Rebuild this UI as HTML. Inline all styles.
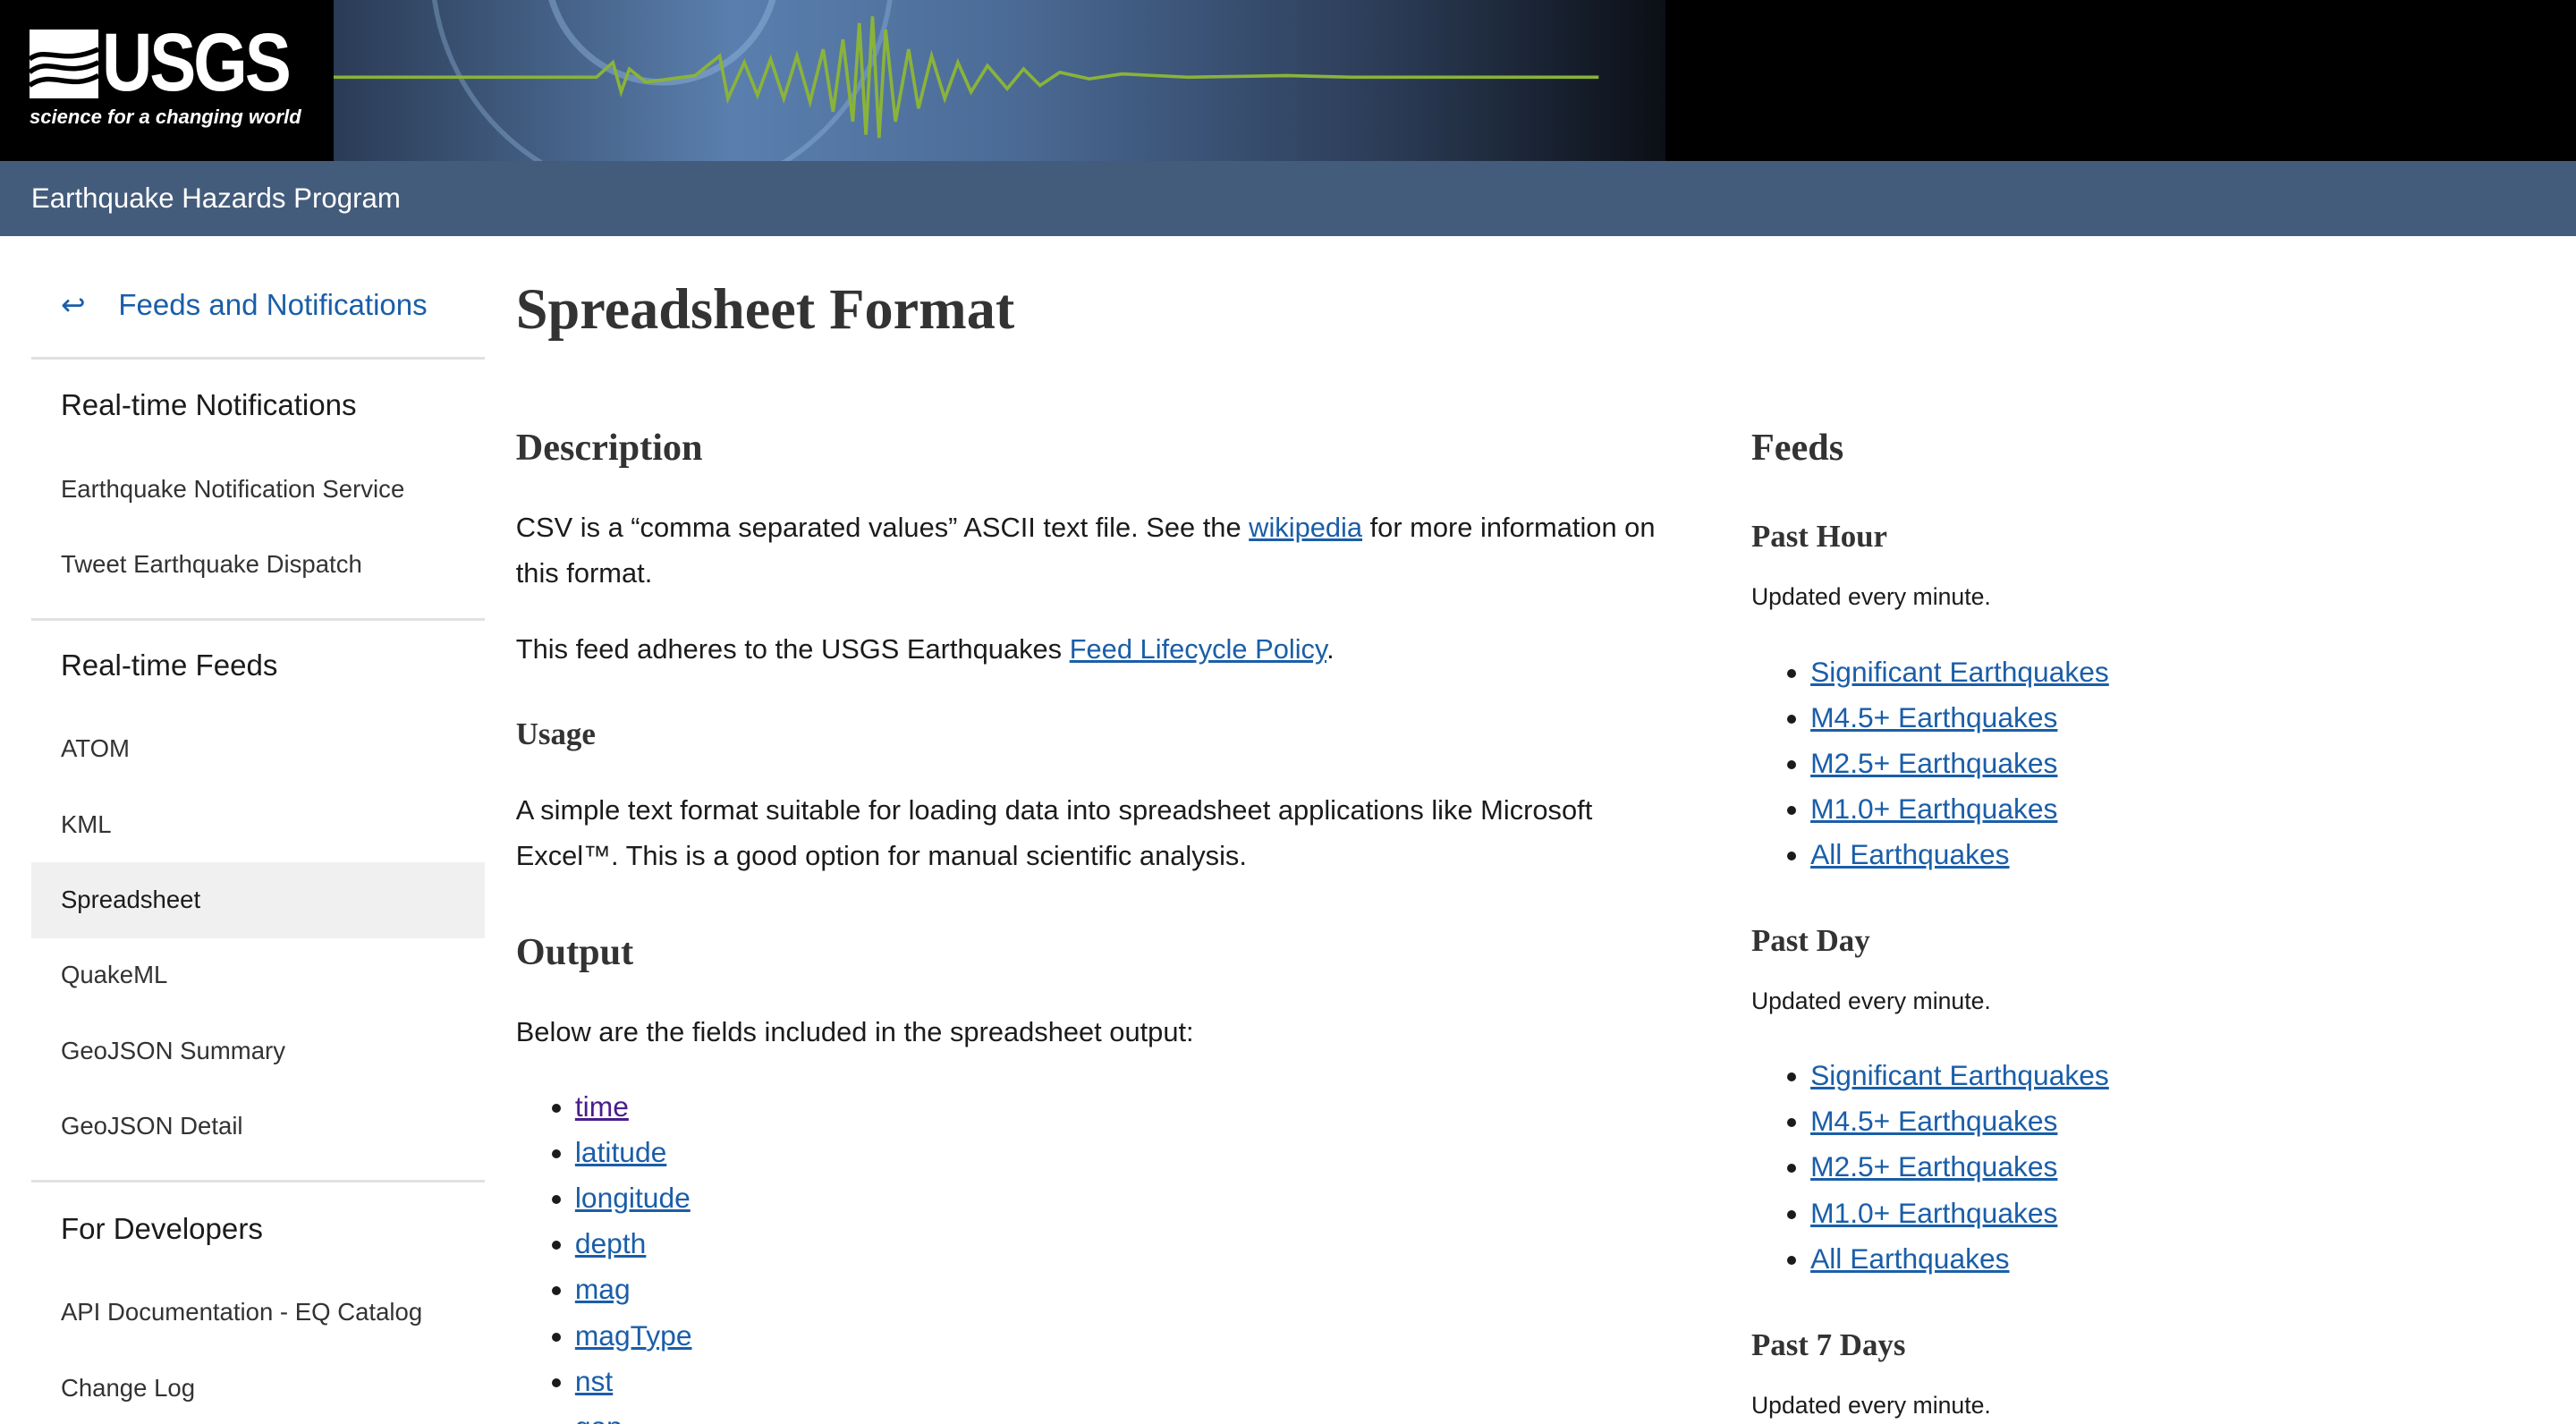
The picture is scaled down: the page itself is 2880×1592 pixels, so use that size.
<!DOCTYPE html>
<html><head><meta charset="utf-8"><style>
html,body{margin:0;padding:0;background:#fff;overflow:hidden}
body{width:1568px;height:867px;zoom:1.83674;font-family:"Liberation Sans",sans-serif;color:#1b1b1b;position:relative}
.hdr{position:absolute;left:0;top:0;width:1568px;height:98px;background:#000}
.banner{position:absolute;left:203px;top:0;width:811px;height:98px;background:linear-gradient(90deg,#2a3b55 0%,#5a7fae 30%,#4c6c98 50%,#2a3a54 80%,#0b0f16 100%);overflow:hidden}
.bar{position:absolute;left:0;top:98px;width:1568px;height:46px;background:#445c7c;color:#fff;font-size:17px}
.bar span{position:absolute;left:19px;top:13px}
.side{position:absolute;left:19px;top:160px;width:276px;font-size:15px;color:#333}
.side div{position:absolute;left:18px}
.sep{position:absolute;left:0!important;width:276px;height:2px;background:#dfe1e2}
a{color:#1a5ea8}
h1{position:absolute;left:314px;top:168px;margin:0;font:bold 35px "Liberation Serif",serif;color:#333}
.h2{position:absolute;font:bold 23px "Liberation Serif",serif;color:#333}
.h3{position:absolute;font:bold 19px "Liberation Serif",serif;color:#333}
.p{position:absolute;font-size:16.8px;line-height:28px;color:#1b1b1b}
.s{position:absolute;font-size:14.5px;color:#1b1b1b}
ul{position:absolute;margin:0;padding:0 0 0 36px;font-size:17.3px;line-height:27.8px}
</style></head><body>
<div class="hdr"></div>
<div class="banner">
<svg width="811" height="98" viewBox="0 0 811 98">
<circle cx="200" cy="-20" r="70" fill="none" stroke="#9cc0e6" stroke-width="4" opacity=".4"/>
<circle cx="200" cy="-20" r="140" fill="none" stroke="#9cc0e6" stroke-width="3" opacity=".35"/>
<polyline fill="none" stroke="#8ab33a" stroke-width="2" points="0,47 160,47 170,38 175,56 180,42 190,50 220,46 235,34 240,60 250,38 258,58 266,36 274,60 282,34 290,62 298,30 304,68 310,24 316,74 320,14 324,82 328,10 332,84 336,18 342,74 350,30 356,66 364,34 372,60 380,38 388,56 398,40 410,54 420,42 430,52 442,44 460,48 480,45 520,47 580,46 620,47 770,47"/>
</svg></div>
<div style="position:absolute;left:18px;top:18px;color:#fff">
<svg style="position:absolute;left:0;top:0" width="42" height="42" viewBox="0 0 42 42"><rect width="42" height="42" fill="#fff"/><path d="M0 18 C10 10 20 22 42 12 M0 26 C12 16 22 30 42 20 M0 34 C14 24 24 38 42 28" stroke="#000" stroke-width="3" fill="none"/></svg>
<div style="position:absolute;left:44px;top:-8px;font:bold 50px 'Liberation Sans Narrow','Liberation Sans',sans-serif;letter-spacing:-2px;transform:scaleX(.85);transform-origin:left">USGS</div>
<div style="position:absolute;left:0;top:46px;font:italic bold 12px 'Liberation Sans Narrow','Liberation Sans',sans-serif;white-space:nowrap">science for a changing world</div>
</div>
<div class="bar"><span>Earthquake Hazards Program</span></div>

<div class="side">
<div style="top:15px;font-size:18px;color:#1a5ea8">↩&nbsp;&nbsp;&nbsp;&nbsp;Feeds and Notifications</div>
<div class="sep" style="top:57px"></div>
<div style="top:77px;font-size:18px;color:#1b1b1b">Real-time Notifications</div>
<div style="top:129px">Earthquake Notification Service</div>
<div style="top:175px">Tweet Earthquake Dispatch</div>
<div class="sep" style="top:216px"></div>
<div style="top:235px;font-size:18px;color:#1b1b1b">Real-time Feeds</div>
<div style="top:287px">ATOM</div>
<div style="top:333px">KML</div>
<div style="left:0!important;top:365px;width:276px;height:46px;background:#f0f0f0"></div>
<div style="top:379px;color:#1b1b1b">Spreadsheet</div>
<div style="top:425px">QuakeML</div>
<div style="top:471px">GeoJSON Summary</div>
<div style="top:517px">GeoJSON Detail</div>
<div class="sep" style="top:558px"></div>
<div style="top:578px;font-size:18px;color:#1b1b1b">For Developers</div>
<div style="top:630px">API Documentation - EQ Catalog</div>
<div style="top:676px">Change Log</div>
</div>

<h1>Spreadsheet Format</h1>
<div class="h2" style="left:314px;top:259px">Description</div>
<div class="p" style="left:314px;top:307px;width:720px">CSV is a “comma separated values” ASCII text file. See the <a href="#">wikipedia</a> for more information on this format.</div>
<div class="p" style="left:314px;top:381px">This feed adheres to the USGS Earthquakes <a href="#">Feed Lifecycle Policy</a>.</div>
<div class="h3" style="left:314px;top:436px">Usage</div>
<div class="p" style="left:314px;top:479px;width:720px">A simple text format suitable for loading data into spreadsheet applications like Microsoft Excel™. This is a good option for manual scientific analysis.</div>
<div class="h2" style="left:314px;top:566px">Output</div>
<div class="p" style="left:314px;top:614px">Below are the fields included in the spreadsheet output:</div>
<ul style="left:314px;top:660px"><li><a href="#" style="color:#4a1d8a">time</a></li><li><a href="#">latitude</a></li><li><a href="#">longitude</a></li><li><a href="#">depth</a></li><li><a href="#">mag</a></li><li><a href="#">magType</a></li><li><a href="#">nst</a></li><li><a href="#">gap</a></li></ul>

<div class="h2" style="left:1066px;top:259px">Feeds</div>
<div class="h3" style="left:1066px;top:316px">Past Hour</div>
<div class="s" style="left:1066px;top:355px">Updated every minute.</div>
<ul style="left:1066px;top:395px"><li><a href="#">Significant Earthquakes</a></li><li><a href="#">M4.5+ Earthquakes</a></li><li><a href="#">M2.5+ Earthquakes</a></li><li><a href="#">M1.0+ Earthquakes</a></li><li><a href="#">All Earthquakes</a></li></ul>
<div class="h3" style="left:1066px;top:562px">Past Day</div>
<div class="s" style="left:1066px;top:601px">Updated every minute.</div>
<ul style="left:1066px;top:641px"><li><a href="#">Significant Earthquakes</a></li><li><a href="#">M4.5+ Earthquakes</a></li><li><a href="#">M2.5+ Earthquakes</a></li><li><a href="#">M1.0+ Earthquakes</a></li><li><a href="#">All Earthquakes</a></li></ul>
<div class="h3" style="left:1066px;top:808px">Past 7 Days</div>
<div class="s" style="left:1066px;top:847px">Updated every minute.</div>
</body></html>
